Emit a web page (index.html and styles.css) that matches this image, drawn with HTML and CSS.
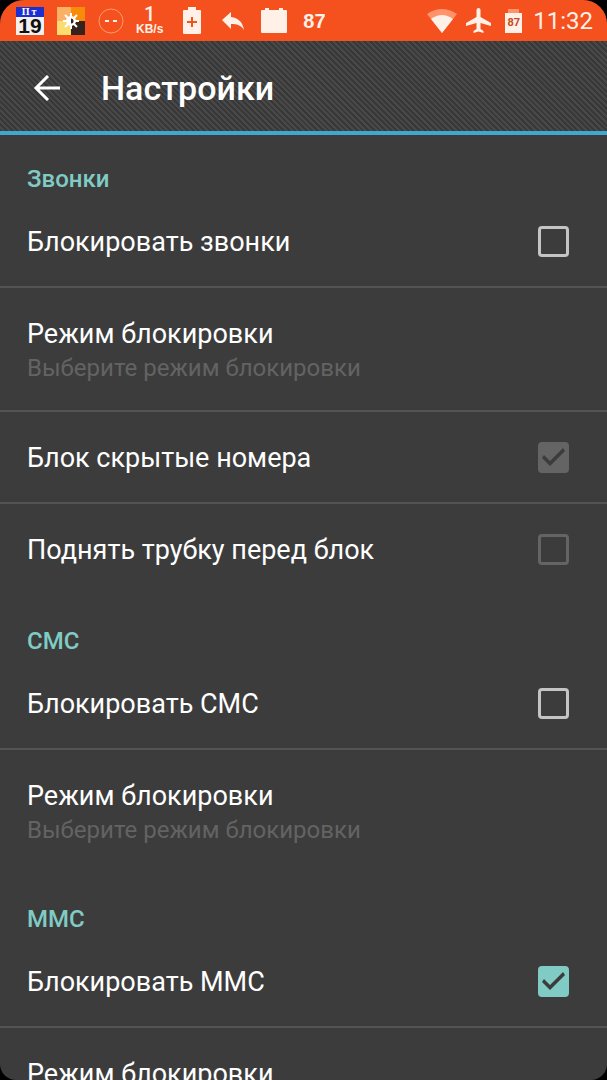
FILE: index.html
```html
<!DOCTYPE html>
<html lang="ru">
<head>
<meta charset="utf-8">
<meta name="viewport" content="width=device-width, initial-scale=1">
<title>Настройки</title>
<link rel="stylesheet" href="styles.css">
</head>
<body>
<div class="screen">
  <div class="status">
    <div class="status-left">
      <div class="calendar"><span class="weekday">Пт</span><span class="day">19</span></div>
      <svg class="weather" width="28" height="28" viewBox="0 0 28 28">
        <rect width="14" height="14" fill="#f9b265"/><rect x="14" width="14" height="14" fill="#f98b0b"/>
        <rect y="14" width="14" height="14" fill="#fbdc70"/><rect x="14" y="14" width="14" height="14" fill="#36221c"/>
        <path d="M14 6v16M6 14h16M8 8l12 12M20 8L8 20" stroke="#fff" stroke-width="2"/>
        <circle cx="14" cy="14" r="5" fill="#fff"/><path d="M14 11.500a2.500 2.500 0 0 1 0 5z" fill="#36221c"/>
      </svg>
      <svg class="dashes" width="26" height="26" viewBox="0 0 26 26" fill="none">
        <circle cx="13" cy="13" r="12" stroke="#ff9b72" stroke-width="1"/>
        <path d="M7 13h4M15 13h4" stroke="#fff0e8" stroke-width="2"/>
      </svg>
      <div class="speed"><span class="speed-value">1</span><span class="speed-unit">KB/s</span></div>
      <svg class="battery-plus" width="18" height="28" viewBox="0 0 18 28">
        <path d="M0 4q0-1 1-1h4V0h8v3h4q1 0 1 1v22q0 1-1 1H1q-1 0-1-1z" fill="#fff0e8"/>
        <path d="M9 10v10M4 15h10" stroke="#f4511e" stroke-width="2"/>
      </svg>
      <svg class="reply" width="22" height="18" viewBox="0 0 22 18"><path d="M9 0v5c8 1 12 6 13 13-3-5-7-6-13-6v5L0 8z" fill="#fff0e8"/></svg>
      <svg class="event" width="26" height="26" viewBox="0 0 26 26"><path d="M1 2h3V0h4v2h10V0h4v2h3q1 0 1 1v21q0 1-1 1H1q-1 0-1-1V3q0-1 1-1z" fill="#fff0e8"/></svg>
      <span class="percent">87</span>
    </div>
    <div class="status-right">
      <svg class="wifi" width="30" height="24" viewBox="0 0 30 24">
        <path d="M0 5Q15-5 30 5L15 24z" fill="#ff936b"/><path d="M4 10q11-8 22 0L15 24z" fill="#fff0e8"/>
      </svg>
      <svg class="plane" width="25" height="25" viewBox="0 0 25 25"><path d="M10.500 2a2 2 0 0 1 4 0v7L25 15v3l-10.500-3v6l3 2v2l-5-1.500-5 1.500v-2l3-2v-6L0 18v-3l10.500-6z" fill="#fff0e8"/></svg>
      <div class="battery"><span class="battery-value">87</span></div>
      <time class="clock">11:32</time>
    </div>
  </div>
  <header class="appbar">
    <button class="back" type="button" aria-label="Назад">
      <svg width="28" height="26" viewBox="0 0 28 26" fill="none" stroke="#fff" stroke-width="3"><path d="M27 13H3M15 1L3 13l12 12"/></svg>
    </button>
    <h1 class="title">Настройки</h1>
  </header>
  <main class="settings">
    <section class="group">
      <h2 class="heading">Звонки</h2>
      <label class="row"><span class="name">Блокировать звонки</span><input class="check" type="checkbox"></label>
      <button class="row row-tall" type="button"><span class="name">Режим блокировки</span><span class="summary">Выберите режим блокировки</span></button>
      <label class="row"><span class="name">Блок скрытые номера</span><input class="check" type="checkbox" checked disabled></label>
      <label class="row"><span class="name">Поднять трубку перед блок</span><input class="check" type="checkbox" disabled></label>
    </section>
    <section class="group">
      <h2 class="heading">СМС</h2>
      <label class="row"><span class="name">Блокировать СМС</span><input class="check" type="checkbox"></label>
      <button class="row row-tall" type="button"><span class="name">Режим блокировки</span><span class="summary">Выберите режим блокировки</span></button>
    </section>
    <section class="group">
      <h2 class="heading">ММС</h2>
      <label class="row"><span class="name">Блокировать ММС</span><input class="check" type="checkbox" checked></label>
      <button class="row row-tall" type="button"><span class="name">Режим блокировки</span><span class="summary">Выберите режим блокировки</span></button>
    </section>
  </main>
</div>
</body>
</html>
```
FILE: styles.css
```css
* { box-sizing: border-box; }
body {
  margin: 0;
  background: #000;
  color: #fff;
  font-family: Roboto, "Noto Sans", sans-serif;
}
.screen {
  height: 100vh;
  overflow: hidden;
  border-radius: 24px 24px 16px 16px;
  background: #3c3c3c;
}
.status {
  display: flex;
  justify-content: space-between;
  height: 41px;
  padding: 0 14px 0 16px;
  background: #f4511e;
  color: #fff0e8;
}
.status-left, .status-right { display: flex; align-items: center; }
.calendar {
  display: flex;
  flex-direction: column;
  width: 28px;
  background: #f4f0f0;
  text-align: center;
}
.weekday {
  background: #1c2fd0;
  color: #fff;
  font: bold 10px/10px "Liberation Serif", serif;
  letter-spacing: 2px;
}
.day { color: #111; font: bold 21px/18px "Liberation Sans", sans-serif; }
.weather { margin-left: 13px; }
.dashes { margin-left: 13px; }
.speed {
  display: flex;
  flex-direction: column;
  align-items: center;
  margin-left: 12px;
}
.speed-value { font-size: 20px; font-weight: 500; line-height: 18px; }
.speed-unit { font: bold 12px/13px "Liberation Sans", sans-serif; }
.battery-plus { margin-left: 20px; }
.reply { margin-left: 21px; }
.event { margin-left: 17px; }
.percent { margin-left: 16px; font: bold 20px/24px "Liberation Sans", sans-serif; }
.plane { margin-left: 9px; }
.battery {
  display: flex;
  flex-direction: column;
  align-items: center;
  width: 17px;
  margin-left: 14px;
}
.battery::before { content: ""; width: 11px; height: 4px; background: #ff936b; }
.battery-value {
  width: 100%;
  background: #fff0e8;
  color: #c84a20;
  font: bold 11px/20px Roboto, sans-serif;
  text-align: center;
}
.clock { margin-left: 11px; font-size: 24px; line-height: 28px; }
.appbar {
  display: flex;
  align-items: center;
  height: 94px;
  padding: 4px 27px 0 33px;
  border-bottom: 4px solid #40a8cf;
  background: repeating-linear-gradient(45deg, #383838 0 2px, #484848 2px 4px);
}
.back {
  display: flex;
  padding: 0;
  border: 0;
  background: none;
}
.title { margin: 0 0 0 40px; font-size: 34px; font-weight: 500; line-height: 42px; }
.heading {
  margin: 0;
  padding: 31px 27px 3px;
  color: #80cbc4;
  font-size: 24px;
  font-weight: 500;
  line-height: 28px;
}
.group:first-child .heading { padding-top: 30px; }
.row {
  display: flex;
  align-items: center;
  justify-content: space-between;
  width: 100%;
  min-height: 92px;
  padding: 0 38px 0 27px;
  border: 0;
  border-bottom: 2px solid #535353;
  background: none;
  color: #fff;
  font-family: inherit;
  text-align: left;
}
.row-tall {
  flex-direction: column;
  align-items: flex-start;
  justify-content: center;
  min-height: 124px;
  padding-top: 4px;
}
.row:last-child { border-bottom-color: transparent; }
.name { font-size: 27px; line-height: 34px; }
.row:not(.row-tall) .name { padding-top: 2px; }
.summary { color: #636363; font-size: 24px; line-height: 34px; }
.check {
  display: grid;
  place-items: center;
  flex: none;
  width: 31px;
  height: 31px;
  margin: 0;
  border: 3px solid #c4c4c4;
  border-radius: 4px;
  appearance: none;
}
.check:disabled { border-color: #646464; }
.check:checked { border-color: #80cbc4; background: #80cbc4; }
.check:checked:disabled { border-color: #646464; background: #646464; }
.check:checked::before {
  content: "";
  width: 23px;
  height: 18px;
  background: #3c3c3c;
  clip-path: polygon(0 10px, 2px 7px, 8px 13px, 21px 0, 23px 3px, 8px 18px);
}
```
